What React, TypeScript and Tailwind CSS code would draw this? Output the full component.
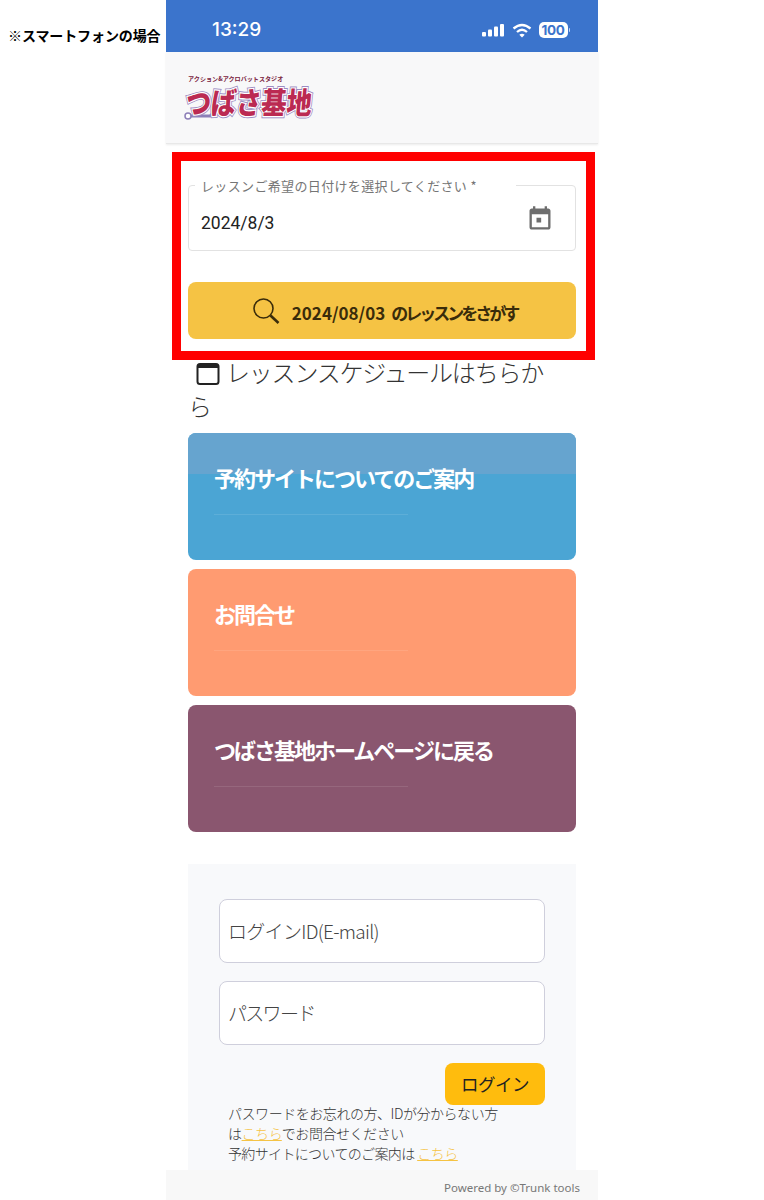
const jp = "font-['Noto_Sans_CJK_JP','Noto_Sans',sans-serif]";

function Logo() {
  const common = { x: 0, y: 0, fontSize: 25.2, fontWeight: 900, fontFamily: "Noto Sans CJK JP, sans-serif" };
  return (
    <svg width="132" height="50" viewBox="0 0 132 50" className="block">
      <text x="4" y="6" fontSize="6.100" fontWeight="700" fill="#7a2340" fontFamily="Noto Sans CJK JP, sans-serif">アクション&アクロバットスタジオ</text>
      <path d="M4 41 H26 L32 35" fill="none" stroke="#8d7fb8" strokeWidth="3" />
      <circle cx="4" cy="41" r="3" fill="#fff" stroke="#8d7fb8" strokeWidth="1.500" />
      <g transform="translate(1 39) skewX(-5) scale(1 1.200)">
        <text {...common} fill="none" stroke="#9c8cc2" strokeWidth="3.500">つばさ基地</text>
        <text {...common} fill="none" stroke="#ffffff" strokeWidth="2">つばさ基地</text>
        <text {...common} fill="#bb2a52">つばさ基地</text>
      </g>
    </svg>
  );
}

function Card({ title, color, top }: { title: string; color: string; top?: boolean }) {
  return (
    <div className={`relative h-[127px] rounded-lg px-[26px] pt-[25px] overflow-hidden ${color}`}>
      {top && <div className="absolute inset-x-0 top-0 h-[41px] bg-[#66a4cf]" />}
      <div className="relative text-[22px] leading-[38px] font-bold text-white tracking-[-2px] whitespace-nowrap">{title}</div>
      <div className="relative mt-[18px] h-px w-[194px] bg-white/10" />
    </div>
  );
}

export default function App() {
  return (
    <div className={`flex w-[764px] h-[1200px] bg-white overflow-hidden ${jp}`}>
      <div className="w-[166px] shrink-0 pl-[8px] pt-[25px] text-[14px] leading-[20px] font-bold text-black tracking-[-0.100px] whitespace-nowrap">※スマートフォンの場合</div>
      <div className="relative w-[432px] h-[1200px] shrink-0 flex flex-col">
        <div className="h-[52px] shrink-0 bg-[#3b74cc] flex items-center justify-between pl-[46px] pr-[28px] pt-[8px] text-white">
          <span className="font-['Inter',sans-serif] text-[19px] font-medium">13:29</span>
          <div className="flex items-center gap-[7px]">
            <svg width="24" height="14" viewBox="0 0 24 14"><rect x="1" y="9" width="4" height="4.500" rx="1" fill="#fff"/><rect x="7" y="6.500" width="4" height="7" rx="1" fill="#fff"/><rect x="13" y="3.500" width="4" height="10" rx="1" fill="#fff"/><rect x="19" y="1" width="4" height="12.500" rx="1" fill="#fff"/></svg>
            <svg width="20" height="15" viewBox="0 0 20 15" fill="none" stroke="#fff" strokeWidth="2.300"><path d="M1.500 5.500 Q10 -1.500 18.500 5.500"/><path d="M5 9 Q10 4.500 15 9"/><path d="M10 14.500 L7.300 11.700 Q10 9.700 12.700 11.700 Z" fill="#fff" stroke="none"/></svg>
            <div className="flex items-center">
              <span className="font-['Inter',sans-serif] bg-white text-[#3b74cc] rounded-[5px] w-[29px] h-[16px] text-[13.500px] leading-[16px] font-bold text-center tracking-[-0.300px]">100</span>
              <span className="w-[1.500px] h-[4px] bg-white/70 rounded-r ml-[1px]" />
            </div>
          </div>
        </div>
        <div className="h-[92px] shrink-0 bg-[#f8f8f9] border-b border-[#e8e8e8] shadow-[0_1px_2px_rgba(0,0,0,0.08)] pl-[18px] pt-[23px]">
          <Logo />
        </div>
        <div className="ml-[6px] mr-[3px] mt-[8px] h-[208px] shrink-0 border-[9px] border-[#ff0000] bg-white pl-[7px] pr-[10px] pt-[24px]">
          <div className="relative h-[66px] rounded-[4px] border border-[#e2e2e2] flex items-center justify-between pl-[12px] pr-[21px]">
            <div className="absolute left-[6px] top-[-8px] bg-white pl-[6px] pr-[39px] text-[13px] leading-[16px] text-[#757575] tracking-[0.350px] whitespace-nowrap">レッスンご希望の日付けを選択してください *</div>
            <span className="font-['Roboto',sans-serif] text-[17.500px] text-[#222] mt-[10px]">2024/8/3</span>
            <svg width="28" height="28" viewBox="0 0 24 24" fill="#6e6e6e" className="mt-[1px]"><path d="M19 3h-1V1h-2v2H8V1H6v2H5c-1.100 0-2 .9-2 2v14c0 1.100.9 2 2 2h14c1.100 0 2-.9 2-2V5c0-1.100-.9-2-2-2zm0 16H5V8h14v11zM9 11h4v4H9z"/></svg>
          </div>
          <div className="mt-[31px] h-[57px] rounded-lg bg-[#f5c344] flex items-center justify-center gap-[12px] pl-[5px] text-[#3a2c0a]">
            <svg width="28" height="28" viewBox="0 0 28 28" fill="none" stroke="#3a2c0a" strokeWidth="1.600"><circle cx="11.500" cy="11.500" r="9.500"/><path d="M18.500 18.500 L26.500 26" strokeWidth="2.600"/></svg>
            <span className="mt-[5px] text-[17px] font-bold whitespace-nowrap flex gap-[6px]">
              <span>2024/08/03</span>
              <span className="tracking-[-3px]">のレッスンをさがす</span>
            </span>
          </div>
        </div>
        <div className="px-[22px] flex-1 flex flex-col">
          <div className="-mt-[5px] h-[78px] text-[24px] leading-[34px] font-light text-[#333] tracking-[-1.200px] whitespace-nowrap">
            <svg width="26" height="26" viewBox="0 0 26 26" fill="none" stroke="#222" strokeWidth="2" className="inline-block ml-[7px] mr-[5px] align-[-4px]"><rect x="2.500" y="4" width="21" height="20" rx="2.500"/><path d="M3 6.500 H23" strokeWidth="3"/></svg>
            レッスンスケジュールはちらか<br />ら
          </div>
          <div className="flex flex-col gap-[9px]">
            <Card title="予約サイトについてのご案内" color="bg-[#4ba5d4]" top />
            <Card title="お問合せ" color="bg-[#ff9b71]" />
            <Card title="つばさ基地ホームページに戻る" color="bg-[#8a566f]" />
          </div>
          <div className="mt-[32px] flex-1 bg-[#f8f9fb] px-[31px] pt-[35px]">
            <div className="h-[64px] rounded-lg border border-[#cfcfdc] bg-white flex items-center px-[8px] text-[19px] font-light text-[#444] tracking-[-0.700px]">ログインID(E-mail)</div>
            <div className="mt-[18px] h-[64px] rounded-lg border border-[#cfcfdc] bg-white flex items-center px-[8px] text-[19px] font-light text-[#444] tracking-[-1.700px]">パスワード</div>
            <div className="mt-[18px] flex justify-end">
              <div className="w-[100px] h-[42px] rounded-lg bg-[#ffbc0d] flex items-center justify-center text-[17.500px] text-[#222] tracking-[-0.500px]">ログイン</div>
            </div>
            <div className="-mt-[2px] pl-[9px] text-[14px] leading-[20px] font-light text-[#333] tracking-[-0.450px]">
              パスワードをお忘れの方、IDが分からない方<br />
              は<span className="text-[#f5c344] underline">こちら</span>でお問合せください<br />
              <span className="tracking-[-0.650px]">予約サイトについてのご案内は</span> <span className="text-[#f5c344] underline">こちら</span>
            </div>
          </div>
        </div>
        <div className="absolute inset-x-0 bottom-0 h-[30px] bg-[#f8f8f8] flex items-end justify-end pr-[18px] pb-[3px] font-['Noto_Sans',sans-serif] text-[11.500px] leading-[18px] text-[#777]">Powered by ©Trunk tools</div>
      </div>
    </div>
  );
}
